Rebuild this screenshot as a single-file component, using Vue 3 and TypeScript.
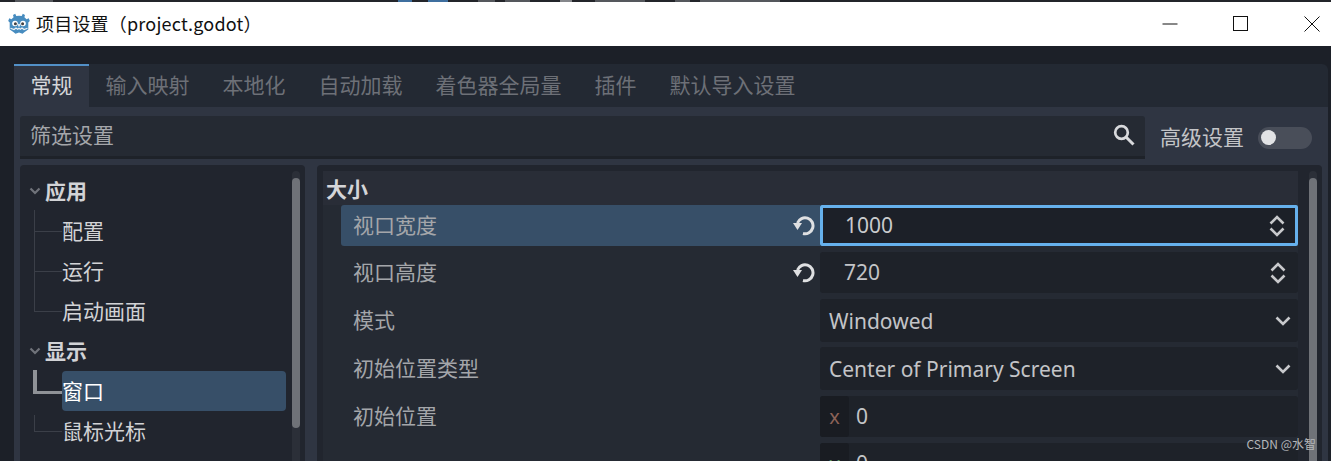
<template>
  <div class="window">
    <div class="top-strip">
      <i v-for="m in stripMarks" :key="m.x" :style="{ marginLeft: m.x + 'px', width: m.w + 'px', background: m.c }"></i>
    </div>
    <header class="titlebar">
      <svg class="logo" width="22" height="22" viewBox="0 0 22 22">
        <path d="M7.200 .8 8.300 3Q11 2.500 13.700 3L14.800 .8 17 1.900 16.400 4.300 18.600 6.200 20.700 5.300 21.800 8 20.300 9.600V16.500Q17 18.600 14.500 20.800L11 19.500 7.500 20.800Q5 18.600 1.700 16.500V9.600L.2 8 1.300 5.300 3.400 6.200 5.600 4.300 5 1.900Z" fill="#478cbf" />
        <path d="M2.500 15.300 6 16.500 8 15 9.700 16.300 11 15.300 12.300 16.300 14 15 16 16.500 19.500 15.300" stroke="#eef3f8" stroke-width="1.200" fill="none" />
        <circle cx="7" cy="10.500" r="2.800" fill="#fff" />
        <circle cx="15" cy="10.500" r="2.800" fill="#fff" />
        <circle cx="7.400" cy="10.800" r="1.500" fill="#414042" />
        <circle cx="14.600" cy="10.800" r="1.500" fill="#414042" />
        <rect x="10.200" y="10.800" width="1.600" height="2.800" rx=".7" fill="#fff" />
      </svg>
      <span class="title">项目设置（project.godot）</span>
      <div class="win-controls">
        <svg width="16" height="16" viewBox="0 0 16 16"><path d="M.5 8H15.500" stroke="#111" fill="none" /></svg>
        <svg width="16" height="16" viewBox="0 0 16 16"><rect x=".5" y=".5" width="14" height="14" stroke="#111" fill="none" /></svg>
        <svg width="16" height="16" viewBox="0 0 16 16"><path d="M.5 .5 15.500 15.500M15.500 .5 .5 15.500" stroke="#111" fill="none" /></svg>
      </div>
    </header>

    <main class="dialog">
      <nav class="tabs">
        <span v-for="(tab, i) in tabs" :key="tab" class="tab" :class="{ active: i === 0 }">{{ tab }}</span>
      </nav>

      <section class="content">
        <div class="filter-row">
          <div class="filter-input">
            <span>筛选设置</span>
            <svg width="22" height="22" viewBox="0 0 22 22">
              <circle cx="8.500" cy="8.500" r="6.300" stroke="#d8d9dc" stroke-width="2.700" fill="none" />
              <path d="M13 13 20.500 20.500" stroke="#d8d9dc" stroke-width="3" fill="none" />
            </svg>
          </div>
          <span class="advanced">高级设置</span>
          <span class="switch"><i></i></span>
        </div>

        <div class="panels">
          <aside class="tree">
            <div class="tree-list">
              <template v-for="group in groups" :key="group.name">
                <div class="tree-row group">
                  <svg width="12" height="8" viewBox="0 0 12 8"><path d="M1.500 1.500 6 6 10.500 1.500" stroke="#70737a" stroke-width="2.200" fill="none" /></svg>
                  <span>{{ group.name }}</span>
                </div>
                <div
                  v-for="(item, i) in group.items"
                  :key="item"
                  class="tree-row item"
                  :class="{ selected: item === '窗口', last: i === group.items.length - 1, 'after-selected': item === '鼠标光标' }"
                >
                  <span>{{ item }}</span>
                </div>
              </template>
            </div>
            <div class="scrollbar tree-scroll"><i></i></div>
          </aside>

          <div class="inspector">
            <div class="props">
              <div class="section-title">大小</div>

              <div class="prop focused">
                <div class="prop-label">
                  <span>视口宽度</span>
                  <svg class="reset" width="22" height="21" viewBox="0 0 22 21">
                    <path d="M4.500 8A8 8 0 1 1 10 18.500" stroke="#dfe0e2" stroke-width="3" fill="none" />
                    <path d="M0 8H9L4.500 15Z" fill="#dfe0e2" />
                  </svg>
                </div>
                <div class="field active">
                  <span class="value num">1000</span>
                  <svg width="18" height="24" viewBox="0 0 18 24"><path d="M2.500 9.500 9 3 15.500 9.500M2.500 14.500 9 21 15.500 14.500" stroke="#c8c9cc" stroke-width="2.600" fill="none" /></svg>
                </div>
              </div>

              <div class="prop">
                <div class="prop-label">
                  <span>视口高度</span>
                  <svg class="reset" width="22" height="21" viewBox="0 0 22 21">
                    <path d="M4.500 8A8 8 0 1 1 10 18.500" stroke="#dfe0e2" stroke-width="3" fill="none" />
                    <path d="M0 8H9L4.500 15Z" fill="#dfe0e2" />
                  </svg>
                </div>
                <div class="field">
                  <span class="value num">720</span>
                  <svg width="18" height="24" viewBox="0 0 18 24"><path d="M2.500 9.500 9 3 15.500 9.500M2.500 14.500 9 21 15.500 14.500" stroke="#c8c9cc" stroke-width="2.600" fill="none" /></svg>
                </div>
              </div>

              <div class="prop tall">
                <div class="prop-label"><span>模式</span></div>
                <div class="field select">
                  <span class="value">Windowed</span>
                  <svg width="16" height="10" viewBox="0 0 16 10"><path d="M1.500 1.500 8 8 14.500 1.500" stroke="#c8c9cc" stroke-width="2.600" fill="none" /></svg>
                </div>
              </div>

              <div class="prop tall">
                <div class="prop-label"><span>初始位置类型</span></div>
                <div class="field select">
                  <span class="value">Center of Primary Screen</span>
                  <svg width="16" height="10" viewBox="0 0 16 10"><path d="M1.500 1.500 8 8 14.500 1.500" stroke="#c8c9cc" stroke-width="2.600" fill="none" /></svg>
                </div>
              </div>

              <div class="prop vector">
                <div class="prop-label"><span>初始位置</span></div>
                <div class="axes">
                  <div class="field axis">
                    <b class="axis-name x">x</b><span class="value">0</span>
                  </div>
                  <div class="field axis">
                    <b class="axis-name y">y</b><span class="value">0</span>
                  </div>
                </div>
              </div>
            </div>
            <div class="scrollbar inspector-scroll"><i></i></div>
          </div>
        </div>
      </section>
    </main>
    <span class="watermark">CSDN @水智</span>
  </div>
</template>

<script setup lang="ts">
// Fragments of whatever sits behind the dialog, visible along the top edge
const stripMarks = [
  { x: 15, w: 38, c: '#55585d' },
  { x: 345, w: 14, c: '#3f6f9f' },
  { x: 16, w: 20, c: '#3f6f9f' },
  { x: 30, w: 17, c: '#55585d' },
  { x: 10, w: 25, c: '#55585d' },
  { x: 30, w: 12, c: '#85878b' },
  { x: 23, w: 50, c: '#55585d' },
  { x: 30, w: 15, c: '#55585d' },
  { x: 10, w: 80, c: '#55585d' },
]

const tabs: string[] = ['常规', '输入映射', '本地化', '自动加载', '着色器全局量', '插件', '默认导入设置']

const groups = [
  { name: '应用', items: ['配置', '运行', '启动画面'] },
  { name: '显示', items: ['窗口', '鼠标光标'] },
]
</script>

<style>
html,
body {
  margin: 0;
  background: #1c2028;
  overflow: hidden;
}
</style>

<style scoped>
.window {
  position: relative;
  width: 1331px;
  height: 461px;
  overflow: hidden;
  display: flex;
  flex-direction: column;
  background: #1c2028;
  font-family: "Noto Sans", "Noto Sans CJK SC", sans-serif;
}

.top-strip {
  height: 2px;
  flex-shrink: 0;
  display: flex;
  background: #23252a;
}

.top-strip i {
  display: block;
  height: 2px;
}

.titlebar {
  height: 44px;
  flex-shrink: 0;
  display: flex;
  align-items: center;
  padding-left: 8px;
  background: #fff;
  color: #111;
}

.logo {
  margin-right: 6px;
  margin-top: -1px;
}

.title {
  font-family: "Noto Sans CJK SC", sans-serif;
  font-size: 18px;
  letter-spacing: .2px;
  margin-top: -3px;
}

.win-controls {
  margin-left: auto;
  margin-right: 11px;
  margin-top: -1px;
  display: flex;
  gap: 55px;
}

.dialog {
  flex: 1;
  min-height: 0;
  margin: 18px 3px 0 14px;
  display: flex;
  flex-direction: column;
  border-radius: 4px 6px 0 0;
  background: #232933;
}

.tabs {
  height: 43px;
  flex-shrink: 0;
  display: flex;
}

.tab {
  display: flex;
  align-items: center;
  padding: 0 16.500px 4px;
  font-size: 21px;
  color: #6d7077;
}

.tab.active {
  color: #d4d5d8;
  background: #2f3542;
  border-top: 2.500px solid #5290c7;
  box-sizing: border-box;
  padding-bottom: 6px;
}

.content {
  flex: 1;
  min-height: 0;
  background: #2f3542;
  padding: 9px 6px 0 6px;
  display: flex;
  flex-direction: column;
  gap: 6px;
}

.filter-row {
  height: 43px;
  flex-shrink: 0;
  display: flex;
  align-items: center;
}

.filter-input {
  width: 1125px;
  height: 43px;
  box-sizing: border-box;
  display: flex;
  align-items: center;
  justify-content: space-between;
  padding: 0 10px 3px 10px;
  background: #252a33;
  border-bottom: 3px solid #1e2229;
  border-radius: 3px 3px 0 0;
  font-size: 21px;
  color: #a4a6aa;
}

.filter-input span {
  margin-top: -2px;
}

.advanced {
  margin-left: 15px;
  margin-top: -3px;
  font-size: 21px;
  color: #c3c4c7;
}

.switch {
  margin-left: 14px;
  width: 54px;
  height: 22px;
  border-radius: 11px;
  background: #494e59;
  display: flex;
  align-items: center;
  padding-left: 3px;
  box-sizing: border-box;
}

.switch i {
  display: block;
  width: 15px;
  height: 15px;
  border-radius: 50%;
  background: #e2e3e5;
}

.panels {
  flex: 1;
  min-height: 0;
  display: flex;
  gap: 12px;
}

.tree {
  width: 285px;
  flex-shrink: 0;
  display: flex;
  background: #21252e;
  border-radius: 4px 4px 0 0;
  padding-top: 6px;
  box-sizing: border-box;
}

.tree-list {
  flex: 1;
}

.tree-row {
  position: relative;
  height: 40px;
  display: flex;
  align-items: center;
  font-size: 21px;
  color: #d2d3d6;
}

.tree-row span {
  margin-top: -3px;
}

.tree-row.group {
  font-weight: 700;
  padding-left: 9px;
  gap: 4px;
}

.tree-row.item {
  margin-left: 42px;
  margin-right: 6px;
}

.tree-row.item::before {
  content: "";
  position: absolute;
  left: -28px;
  top: 0;
  width: 27px;
  height: 20px;
  border-left: 1.500px solid #3b3f48;
  border-bottom: 1.500px solid #3b3f48;
}

.tree-row.group + .tree-row.item::before {
  top: -1px;
  height: 21px;
}

.tree-row.item:not(.last)::after {
  content: "";
  position: absolute;
  left: -28px;
  top: 20px;
  height: 20px;
  border-left: 1.500px solid #3b3f48;
}

.tree-row.selected {
  background: #374f68;
  border-radius: 4px;
  color: #fff;
}

.tree-row.selected::before {
  left: -29px;
  top: 0;
  width: 25px;
  height: 19px;
  border-left: 4px solid #8f9297;
  border-bottom: 3px solid #8f9297;
}

.tree-row.selected:not(.last)::after {
  display: none;
}

.tree-row.after-selected::before {
  top: 4px;
  height: 16px;
}

.scrollbar {
  flex-shrink: 0;
  width: 8px;
  background: #2b2f38;
  border-radius: 4px 4px 0 0;
  padding-top: 7px;
  box-sizing: border-box;
}

.scrollbar i {
  display: block;
  border-radius: 4px;
  background: #6f7278;
}

.tree-scroll {
  margin-right: 5px;
}

.tree-scroll i {
  height: 250px;
}

.inspector {
  flex: 1;
  min-width: 0;
  display: flex;
  gap: 11px;
  background: #21252e;
  border-radius: 4px 4px 0 0;
  padding: 6px 5px 0 6px;
  box-sizing: border-box;
}

.inspector-scroll i {
  height: 300px;
}

.props {
  flex: 1;
  min-width: 0;
  background: #252a33;
}

.section-title {
  height: 34px;
  display: flex;
  align-items: center;
  padding-left: 3px;
  background: #292d37;
  font-size: 21px;
  font-weight: 700;
  color: #d4d5d8;
}

.prop {
  display: flex;
  height: 41px;
  margin: 0 0 6px 18px;
}

.prop.tall {
  height: 42px;
}

.prop.vector {
  height: auto;
  margin-bottom: 0;
}

.prop-label {
  flex: 1;
  min-width: 0;
  display: flex;
  align-items: center;
  justify-content: space-between;
  padding: 0 5px 0 12px;
  font-size: 21px;
  color: #a4a6aa;
  height: 41px;
}

.prop-label span {
  margin-top: -3px;
}

.prop.tall .prop-label {
  height: 43px;
}

.prop.vector .prop-label {
  height: 43px;
}

.prop.focused .prop-label {
  background: #374f68;
  border-radius: 3px 0 0 3px;
}

.field {
  width: 478px;
  flex-shrink: 0;
  box-sizing: border-box;
  display: flex;
  align-items: center;
  justify-content: space-between;
  padding: 0 11px 0 9px;
  background: #1e2229;
  border-radius: 3px;
}

.field.active {
  border: 3px solid #66b1ed;
  border-radius: 2px;
  background: #1c2028;
  padding: 0 9px 0 7px;
}

.field.active .value {
  color: #c9cacd;
}

.field.select {
  padding-right: 7px;
  height: 43px;
}

.field.select .value {
  margin-top: 0;
}

.value {
  font-size: 21px;
  color: #c3c4c7;
  margin-top: -1px;
}

.value.num {
  padding-left: 15px;
}

.axes {
  display: flex;
  flex-direction: column;
  gap: 6px;
  width: 478px;
  flex-shrink: 0;
  margin-top: 1px;
}

.field.axis {
  height: 41px;
  padding: 0;
  justify-content: flex-start;
  gap: 7px;
}

.axis-name {
  width: 29px;
  height: 41px;
  display: flex;
  align-items: center;
  justify-content: center;
  border-radius: 3px;
  background: #191c22;
  font-weight: 400;
  font-size: 20px;
}

.axis-name.x {
  color: #8c6257;
}

.axis-name.y {
  color: #5c9467;
}

.watermark {
  position: absolute;
  right: 15px;
  top: 435px;
  font-family: "Noto Sans CJK SC", sans-serif;
  font-size: 12px;
  color: #b4b6b9;
}
</style>
